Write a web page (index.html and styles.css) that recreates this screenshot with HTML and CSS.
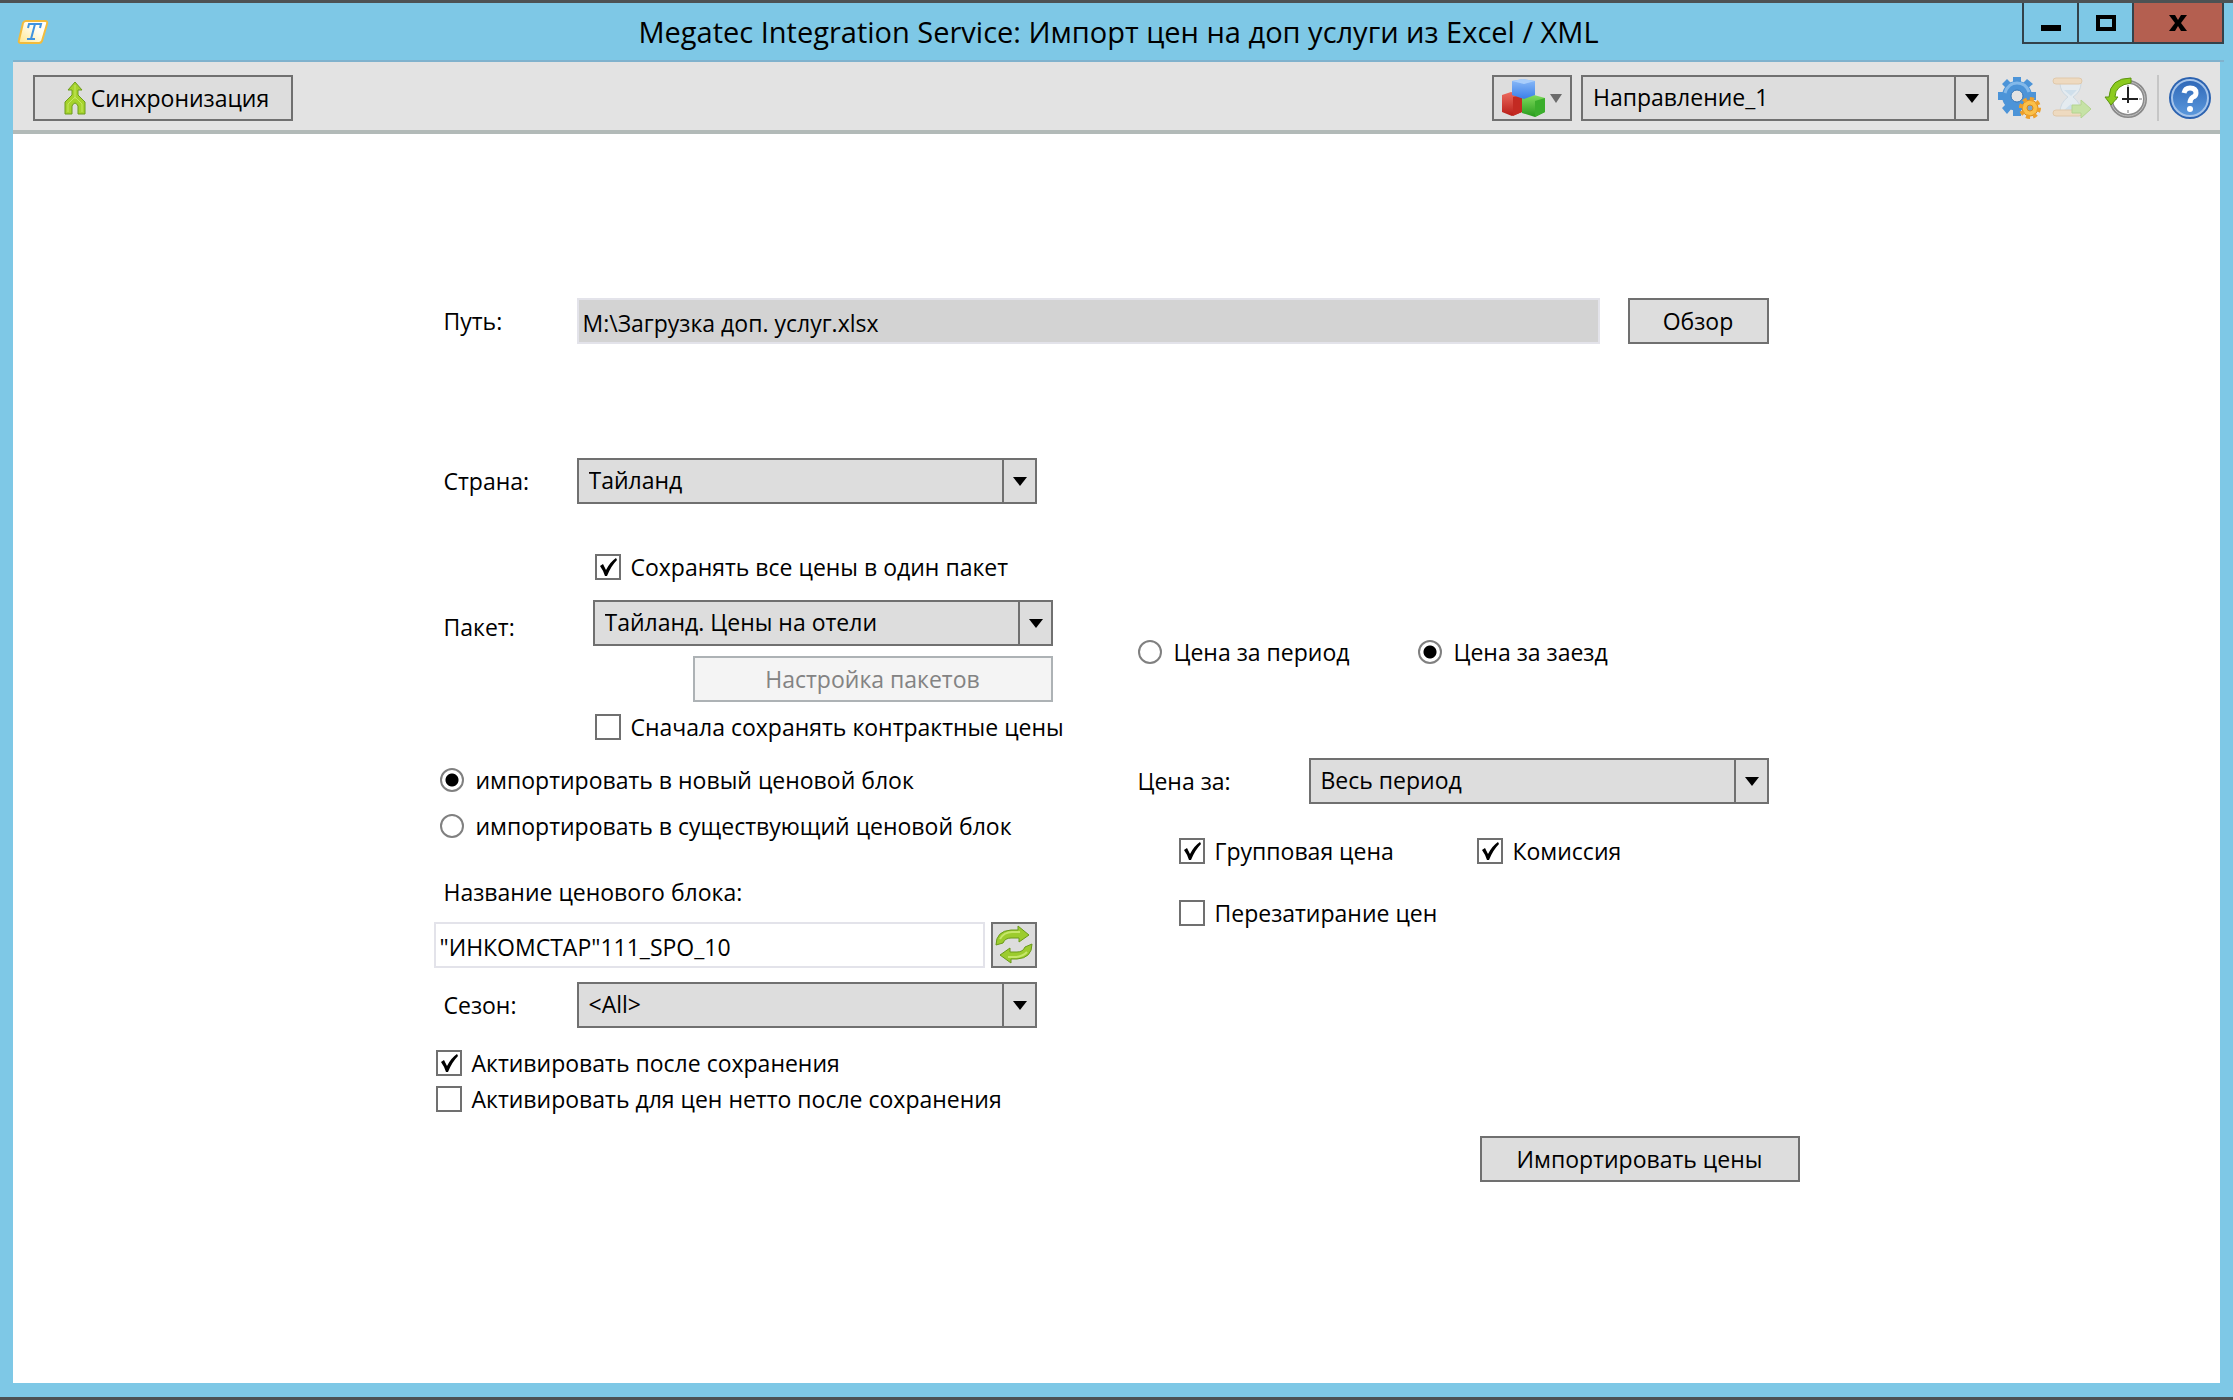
FILE: index.html
```html
<!DOCTYPE html>
<html lang="ru">
<head>
    <meta charset="UTF-8">
    <meta name="viewport" content="width=device-width, initial-scale=1.0">
    <title>Megatec Integration Service</title>
    <link rel="stylesheet" href="styles.css">
</head>
<body>

<div class="window">
    <header class="titlebar">
        <svg class="logo" viewBox="0 0 32 26" width="32" height="26">
            <defs>
                <linearGradient id="logoFill" x1="0" y1="1" x2="1" y2="0">
                    <stop offset="0" stop-color="#ffe68a"/>
                    <stop offset="0.6" stop-color="#fffdf0"/>
                    <stop offset="1" stop-color="#ffffff"/>
                </linearGradient>
            </defs>
            <path d="M9 2H28Q31 2 30 5L25 22Q24 24 22 24H4Q1 24 2 21L6 4Q7 2 9 2Z" fill="url(#logoFill)" stroke="#f2bb3c" stroke-width="2"/>
            <path d="M11 9L12 5H24L23 9M18 5L14 20M10 20H18" fill="none" stroke="#3f93e0" stroke-width="2"/>
        </svg>
        <h1 class="title">Megatec Integration Service: Импорт цен на доп услуги из Excel / XML</h1>
        <div class="window-buttons">
            <button type="button" class="win-btn" aria-label="Свернуть">
                <svg viewBox="0 0 20 20" width="20" height="20"><path d="M0 12H20V18H0Z"/></svg>
            </button>
            <button type="button" class="win-btn" aria-label="Развернуть">
                <svg viewBox="0 0 20 20" width="20" height="20"><path d="M2 4H18V16H2Z" fill="none" stroke="#000" stroke-width="4"/></svg>
            </button>
            <button type="button" class="win-btn win-close" aria-label="Закрыть">
                <svg viewBox="0 0 20 20" width="20" height="20"><path d="M1 2H7L10 7L13 2H19L13 10L19 18H13L10 13L7 18H1L7 10Z"/></svg>
            </button>
        </div>
    </header>

    <div class="toolbar">
        <button type="button" class="btn sync-btn">
            <svg viewBox="0 0 24 34" width="24" height="34">
                <path d="M12 1L19 9H15V14L22 21V33H15V25Q12 19 9 25V33H2V21L9 14V9H5Z" fill="#a6d32c" stroke="#6d9c1c" stroke-width="1"/>
                <path d="M12 4V18M5 31V23L12 16L19 23V31" fill="none" stroke="#c5e860" stroke-width="1"/>
            </svg>
            Синхронизация
        </button>

        <div class="tools">
            <button type="button" class="btn cubes-btn" aria-label="Справочники">
                <svg viewBox="0 0 62 38" width="62" height="38">
                    <defs>
                        <linearGradient id="cubeBlue" x1="0" y1="0" x2="0" y2="1"><stop offset="0" stop-color="#8dbcf8"/><stop offset="1" stop-color="#3a7fe8"/></linearGradient>
                        <linearGradient id="cubeRed" x1="0" y1="0" x2="0" y2="1"><stop offset="0" stop-color="#ec6a5e"/><stop offset="1" stop-color="#b81c16"/></linearGradient>
                        <linearGradient id="cubeGreen" x1="0" y1="0" x2="0" y2="1"><stop offset="0" stop-color="#7fdc5c"/><stop offset="1" stop-color="#279a1c"/></linearGradient>
                    </defs>
                    <path d="M1 16L10 13L21 16V33L11 37L1 33Z" fill="url(#cubeRed)"/>
                    <path d="M12 18L21 16V33L12 37Z" fill="#c32a22"/>
                    <path d="M21 19L33 16L44 19V33L34 38L21 34Z" fill="url(#cubeGreen)"/>
                    <path d="M34 22L44 19V33L34 38Z" fill="#3bae2c"/>
                    <path d="M11 2L22 0L34 2V16L23 20L11 16Z" fill="url(#cubeBlue)"/>
                    <path d="M11 2L22 0L34 2L23 5Z" fill="#a9cefb"/>
                    <path d="M49 15H61L55 24Z" fill="#6b6b6b"/>
                </svg>
            </button>
            <select class="select direction" aria-label="Направление">
                <option>Направление_1</option>
            </select>
            <button type="button" class="icon-btn" aria-label="Настройки">
                <svg viewBox="0 0 44 44" width="44" height="44">
                    <g fill="#4c94d8">
                        <path d="M15 1H23V7H15ZM15 34H23V40H15ZM0 16H6V24H0ZM32 16H38V24H32Z"/>
                        <path d="M4 8L9 3L14 8L9 13ZM24 8L29 3L35 8L29 13ZM4 32L9 27L14 32L9 38Z"/>
                        <circle cx="19" cy="20" r="15"/>
                    </g>
                    <path d="M7 17Q10 7 19 7Q28 7 31 16" fill="none" stroke="#83b9ea" stroke-width="3"/>
                    <circle cx="19" cy="20" r="6" fill="#e3e3e3" stroke="#3778b8" stroke-width="1"/>
                    <circle cx="32" cy="32" r="8" fill="#fbc04a" stroke="#d98a1c"/>
                    <circle cx="32" cy="32" r="9" fill="none" stroke="#eda02c" stroke-width="4" stroke-dasharray="4 3"/>
                    <circle cx="32" cy="32" r="3" fill="#7ba5cc" stroke="#d98a1c"/>
                </svg>
            </button>
            <button type="button" class="icon-btn" aria-label="Очередь" disabled>
                <svg viewBox="0 0 44 44" width="44" height="44">
                    <path d="M9 7H30Q30 16 22 21Q30 27 30 36H9Q9 27 17 21Q9 16 9 7Z" fill="#e4ebf0" stroke="#cdd9e2"/>
                    <path d="M13 14H26L20 20ZM12 35L20 28L27 35Z" fill="#cfdfeb"/>
                    <rect x="2" y="2" width="29" height="6" rx="3" fill="#eedac0" stroke="#e0c8aa"/>
                    <rect x="2" y="34" width="29" height="6" rx="3" fill="#eedac0" stroke="#e0c8aa"/>
                    <path d="M21 29H30V24L40 33L30 42V37H21Z" fill="#c6e2a6" stroke="#b4d490"/>
                </svg>
            </button>
            <button type="button" class="icon-btn" aria-label="История">
                <svg viewBox="0 0 44 44" width="44" height="44">
                    <circle cx="24" cy="23" r="17" fill="#fff" stroke="#8a8a8a" stroke-width="4"/>
                    <circle cx="24" cy="23" r="17" fill="none" stroke="#c4c4c4" stroke-width="1"/>
                    <path d="M24 9V12M24 34V37M35 23H38M10 23H13" stroke="#777" stroke-width="1"/>
                    <path d="M24 11V27M18 23H34" stroke="#222" stroke-width="2"/>
                    <path d="M27 2Q6 2 5 21H1L7 29L14 21H11Q11 9 27 7Z" fill="#8ccb1e" stroke="#5c9410"/>
                </svg>
            </button>
            <span class="divider"></span>
            <button type="button" class="icon-btn" aria-label="Справка">
                <svg viewBox="0 0 44 44" width="44" height="44">
                    <defs>
                        <linearGradient id="helpFill" x1="0" y1="0" x2="0" y2="1"><stop offset="0" stop-color="#2f68b8"/><stop offset="1" stop-color="#5b98dc"/></linearGradient>
                    </defs>
                    <circle cx="22" cy="22" r="21" fill="#2b62b0"/>
                    <circle cx="22" cy="22" r="18" fill="url(#helpFill)" stroke="#a5c4ea" stroke-width="2"/>
                    <path d="M16 17Q17 12 22 12Q28 12 28 17Q28 20 25 21Q22 23 22 27" fill="none" stroke="#fff" stroke-width="5"/>
                    <circle cx="22" cy="33" r="3" fill="#fff"/>
                </svg>
            </button>
        </div>
    </div>

    <main class="content">
        <form class="import-form">
            <div class="row path-row">
                <label class="label" for="path">Путь:</label>
                <input type="text" id="path" class="text-input path" value="M:\Загрузка доп. услуг.xlsx" readonly>
                <button type="button" class="btn browse-btn">Обзор</button>
            </div>

            <div class="columns">
                <div class="left">
                    <div class="row">
                        <label class="label" for="country">Страна:</label>
                        <select id="country" class="select">
                            <option>Тайланд</option>
                        </select>
                    </div>

                    <div class="package">
                        <label class="label package-label" for="package">Пакет:</label>
                        <div class="package-fields">
                            <label class="check"><input type="checkbox" checked>Сохранять все цены в один пакет</label>
                            <select id="package" class="select">
                                <option>Тайланд. Цены на отели</option>
                            </select>
                            <button type="button" class="btn package-btn" disabled>Настройка пакетов</button>
                            <label class="check"><input type="checkbox">Сначала сохранять контрактные цены</label>
                        </div>
                    </div>

                    <div class="block-mode">
                        <label class="radio"><input type="radio" name="block" checked>импортировать в новый ценовой блок</label>
                        <label class="radio"><input type="radio" name="block">импортировать в существующий ценовой блок</label>
                    </div>

                    <label class="label block-label" for="blockName">Название ценового блока:</label>
                    <div class="row name-row">
                        <input type="text" id="blockName" class="text-input" value="&quot;ИНКОМСТАР&quot;111_SPO_10">
                        <button type="button" class="btn refresh-btn" aria-label="Обновить">
                            <svg viewBox="0 0 40 40" width="40" height="40">
                                <path d="M2 20Q2 6 17 5L24 5V1L35 10L25 17V13H17Q11 13 9 18Z" fill="#9ccc2e" stroke="#6a9a1a"/>
                                <path d="M38 19Q38 33 23 34H17V38L6 30L16 23V27H23Q29 27 31 22Z" fill="#9ccc2e" stroke="#6a9a1a"/>
                                <path d="M6 14Q10 7 18 7H26M33 27Q28 32 21 32H14" fill="none" stroke="#c6e66a" stroke-width="2"/>
                            </svg>
                        </button>
                    </div>
                    <div class="row season-row">
                        <label class="label" for="season">Сезон:</label>
                        <select id="season" class="select">
                            <option>&lt;All&gt;</option>
                        </select>
                    </div>

                    <div class="activate">
                        <label class="check"><input type="checkbox" checked>Активировать после сохранения</label>
                        <label class="check"><input type="checkbox">Активировать для цен нетто после сохранения</label>
                    </div>
                </div>

                <div class="right">
                    <div class="price-type">
                        <label class="radio"><input type="radio" name="price">Цена за период</label>
                        <label class="radio"><input type="radio" name="price" checked>Цена за заезд</label>
                    </div>
                    <div class="row price-row">
                        <label class="price-label" for="priceFor">Цена за:</label>
                        <select id="priceFor" class="select">
                            <option>Весь период</option>
                        </select>
                    </div>
                    <div class="price-options">
                        <label class="check"><input type="checkbox" checked>Групповая цена</label>
                        <label class="check"><input type="checkbox" checked>Комиссия</label>
                        <label class="check"><input type="checkbox">Перезатирание цен</label>
                    </div>
                    <button type="button" class="btn import-btn">Импортировать цены</button>
                </div>
            </div>
        </form>
    </main>
</div>

</body>
</html>
```
FILE: styles.css
```css
* {
    box-sizing: border-box;
}
body {
    margin: 0;
    font-family: "Open Sans", "Noto Sans", sans-serif;
    font-size: 23px;
    line-height: 36px;
    color: #000;
}
button, input, select {
    font: inherit;
    color: inherit;
    margin: 0;
}
svg {
    display: block;
    flex: none;
}

/* window frame */
.window {
    display: flex;
    flex-direction: column;
    min-height: 100vh;
    padding: 0 13px 14px;
    background-color: #7ec8e6;
    border-top: 3px solid #4d5254;
    border-bottom: 3px solid #4d5254;
}
.titlebar {
    display: grid;
    grid-template-columns: 1fr auto 1fr;
    align-items: center;
    height: 59px;
    margin-right: -4px;
    border-bottom: 2px solid #80b2cd;
}
.logo {
    margin-left: 4px;
}
.title {
    margin: 0;
    font-size: 29px;
    font-weight: normal;
}
.window-buttons {
    display: flex;
    align-self: start;
    justify-self: end;
}
.win-btn {
    display: flex;
    align-items: center;
    justify-content: center;
    width: 55px;
    height: 41px;
    padding: 0;
    background: none;
    border: 2px solid #33424a;
    border-top: none;
    border-right: none;
}
.win-close {
    width: 92px;
    background-color: #b45f50;
    border-right: 2px solid #33424a;
}

/* toolbar */
.toolbar {
    display: flex;
    align-items: center;
    justify-content: space-between;
    height: 72px;
    padding: 4px 8px 0 20px;
    background-color: #e3e3e3;
    border-bottom: 4px solid #b2bab8;
}
.tools {
    display: flex;
    align-items: center;
    gap: 9px;
}
.btn {
    display: flex;
    align-items: center;
    justify-content: center;
    height: 46px;
    padding: 0;
    background-color: #ddd;
    border: 2px solid #707070;
}
.btn:disabled {
    color: #838383;
    background-color: #f4f4f4;
    border-color: #adb2b5;
}
.sync-btn {
    gap: 4px;
    width: 260px;
    padding-left: 6px;
}
.cubes-btn {
    width: 80px;
}
.icon-btn {
    padding: 0;
    background: none;
    border: none;
}
.divider {
    width: 2px;
    height: 46px;
    background-color: #c6c6c6;
}

/* controls */
.select {
    appearance: none;
    width: 460px;
    height: 46px;
    padding: 0 44px 2px 10px;
    border: 2px solid #707070;
    border-radius: 0;
    background-color: #ddd;
    background-image:
        url("data:image/svg+xml,%3Csvg xmlns='http://www.w3.org/2000/svg' width='14' height='9'%3E%3Cpath d='M0 0H14L7 9Z'/%3E%3C/svg%3E"),
        linear-gradient(#707070, #707070);
    background-repeat: no-repeat;
    background-position: right 8px center, right 31px center;
    background-size: 14px 9px, 2px 100%;
}
.direction {
    width: 408px;
}
.text-input {
    flex: 1;
    min-width: 0;
    height: 46px;
    padding: 4px 4px 0;
    background-color: #fff;
    border: 2px solid #e3e3ea;
}
.path {
    background-color: #d3d3d3;
}
.check, .radio {
    display: flex;
    align-items: center;
}
.check {
    gap: 10px;
    height: 36px;
}
.radio {
    gap: 12px;
    height: 46px;
}
.check input {
    appearance: none;
    flex: none;
    width: 26px;
    height: 26px;
    background-color: #fff;
    border: 2px solid #707070;
}
.check input:checked {
    background-image: url("data:image/svg+xml,%3Csvg xmlns='http://www.w3.org/2000/svg' viewBox='0 0 22 22'%3E%3Cpath d='M3 10L6 8L9 14Q13 6 19 2L20 4Q14 10 10 20H8Q6 14 3 10Z'/%3E%3C/svg%3E");
}
.radio input {
    appearance: none;
    flex: none;
    width: 24px;
    height: 24px;
    background-color: #fff;
    border: 2px solid #808080;
    border-radius: 50%;
}
.radio input:checked {
    background-image: radial-gradient(circle, #000 6px, transparent 7px);
}

/* form */
.content {
    flex: 1;
    padding-top: 164px;
    background-color: #fff;
}
.import-form {
    max-width: 1366px;
    margin: 0 auto;
}
.row {
    display: flex;
    align-items: center;
}
.label {
    width: 143px;
    padding-left: 10px;
}
.path-row {
    margin-right: 31px;
}
.browse-btn {
    width: 141px;
    margin-left: 28px;
}
.columns {
    display: grid;
    grid-template-columns: 704px 1fr;
    margin-top: 114px;
}
.package {
    display: flex;
    align-items: center;
    margin-top: 45px;
}
.package-label {
    width: 159px;
    padding-bottom: 40px;
}
.package-fields {
    display: flex;
    flex-direction: column;
    width: 460px;
}
.package-fields .select {
    margin-top: 15px;
}
.package-fields .check {
    margin-left: 2px;
    white-space: nowrap;
}
.package-btn {
    align-self: flex-end;
    width: 360px;
    margin: 10px 0 7px;
}
.block-mode {
    margin-top: 12px;
    padding-left: 6px;
}
.block-label {
    display: block;
    width: auto;
    margin-top: 25px;
}
.name-row {
    gap: 6px;
    width: 603px;
    margin: 12px 0 14px;
}
.refresh-btn {
    width: 46px;
}
.activate {
    margin-top: 17px;
    padding-left: 2px;
}
.right {
    display: flex;
    flex-direction: column;
    padding-top: 171px;
}
.price-type {
    display: grid;
    grid-template-columns: 280px 1fr;
}
.price-row {
    margin-top: 83px;
}
.price-label {
    width: 171px;
}
.price-options {
    display: grid;
    grid-template-columns: 298px 1fr;
    row-gap: 26px;
    margin-top: 29px;
    padding-left: 41px;
}
.import-btn {
    align-self: flex-end;
    width: 320px;
    margin-top: 205px;
}
```
